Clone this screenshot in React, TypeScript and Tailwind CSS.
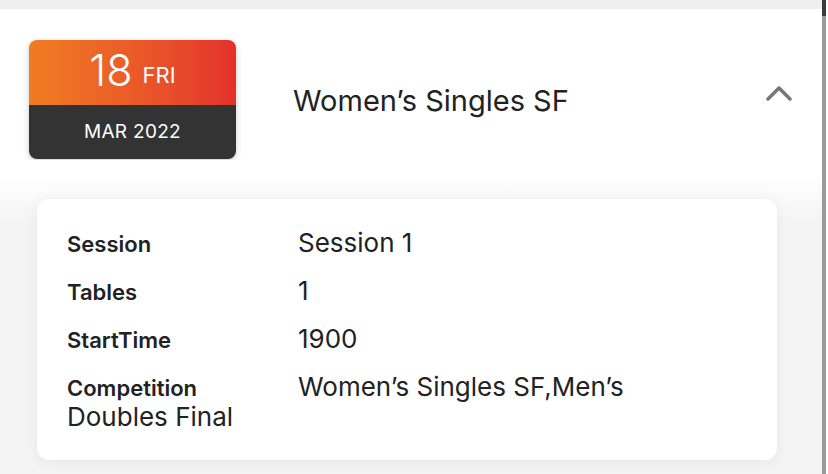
const rows = [
  { label: "Session", value: "Session 1" },
  { label: "Tables", value: "1" },
  { label: "StartTime", value: "1900" },
];

const DateBadge = () => {
  return (
    <div className="w-[207px] h-[119px] rounded-lg overflow-hidden shadow-[0_2px_6px_rgba(0,0,0,0.2)] flex flex-col text-white">
      <div className="h-[65px] bg-gradient-to-r from-[#f07c22] to-[#e3302c] flex items-end justify-center gap-[10px] pb-[19px]">
        <span className="text-[43px] leading-[32px] font-light">18</span>
        <span className="text-[22px] leading-[22px]">FRI</span>
      </div>
      <div className="flex-1 bg-[#333333] flex items-center justify-center text-[19px] tracking-[0.3px]">
        MAR 2022
      </div>
    </div>
  );
};

export default function App() {
  return (
    <div className="w-[828px] h-[474px] overflow-hidden bg-[#efefef] flex font-['Inter',sans-serif] text-[#222]">
      <div className="w-[822px] mt-[9px] bg-white flex flex-col">
        <div className="flex items-center pl-[29px] pr-[30px] pt-[30px] h-[151px] shrink-0">
          <DateBadge />
          <h1 className="ml-[57px] text-[29px] text-[#222] flex-1 pt-[2px]">Women’s Singles SF</h1>
          <svg width="26" height="16" viewBox="0 0 26 16" className="mb-[14px]">
            <polyline
              points="2,14 13,3 24,14"
              fill="none"
              stroke="#777"
              strokeWidth="3.5"
              strokeLinecap="round"
              strokeLinejoin="round"
            />
          </svg>
        </div>

        <div className="flex-1 bg-gradient-to-b from-white from-[5%] to-[#f4f4f4] to-[20%] pl-[37px] pr-[45px] pt-[39px]">
          <div className="bg-white rounded-xl shadow-[0_2px_14px_rgba(0,0,0,0.06)] px-[30px] pt-[30px] pb-[29px] flex flex-col gap-[20px]">
            {rows.map((row) => (
              <div key={row.label} className="flex items-baseline h-[28px] leading-[28px]">
                <span className="w-[231px] shrink-0 text-[22px] font-semibold">{row.label}</span>
                <span className="text-[26px]">{row.value}</span>
              </div>
            ))}
            <div>
              <div className="flex items-baseline h-[28px] leading-[28px]">
                <span className="w-[231px] shrink-0 text-[22px] font-semibold">Competition</span>
                <span className="text-[26px]">Women’s Singles SF,Men’s</span>
              </div>
              <div className="mt-[2px] h-[28px] leading-[28px] text-[26px]">Doubles Final</div>
            </div>
          </div>
        </div>
      </div>
      <div className="w-[4px] flex flex-col bg-[#9a9a9a]">
        <div className="h-[16px] bg-[#3a3a3a]" />
      </div>
      <div className="flex-1 bg-white" />
    </div>
  );
}
